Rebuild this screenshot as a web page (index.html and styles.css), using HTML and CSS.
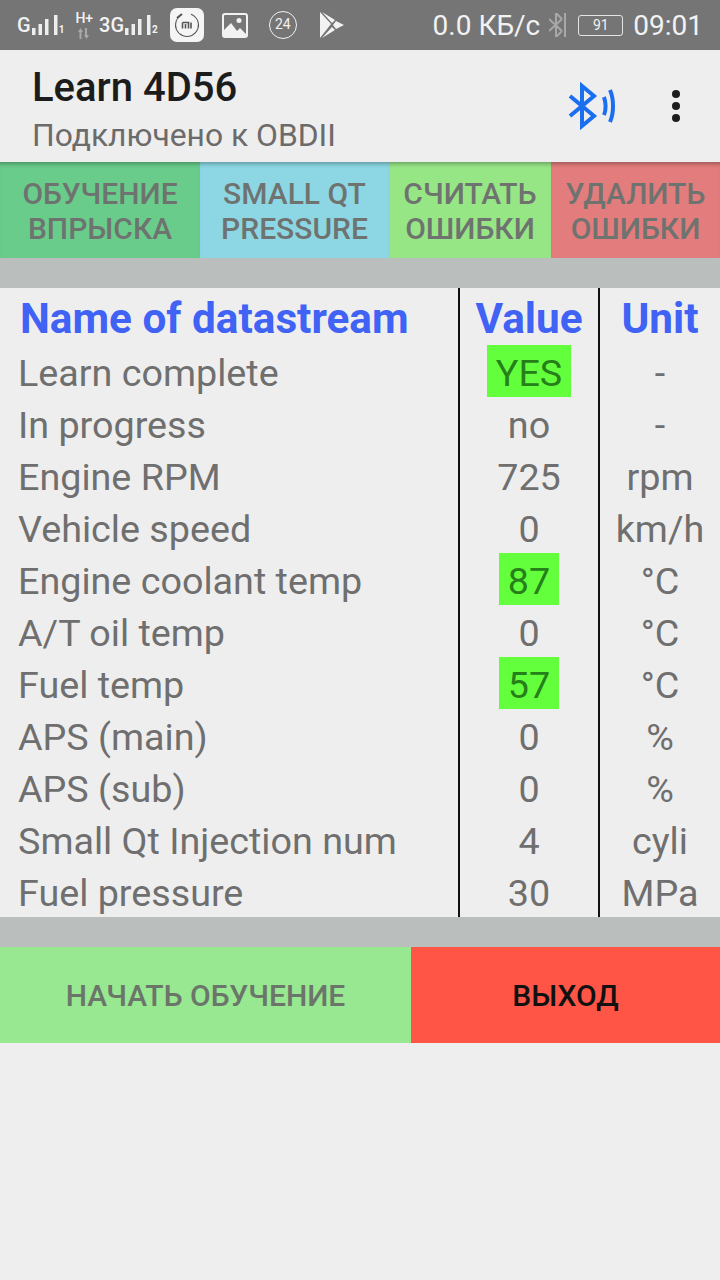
FILE: index.html
```html
<!DOCTYPE html>
<html lang="ru">

<head>
      <meta charset="UTF-8">
      <meta name="viewport" content="width=device-width, initial-scale=1.0">
      <title>Learn 4D56</title>
      <link rel="stylesheet" href="styles.css">
</head>

<body>
      <div class="statusbar">
            <div class="status-left">
                  <span class="sig"><span class="sig-net">G</span>
                        <svg width="27" height="20" viewBox="0 0 27 20"><path d="M0 13h3.500v7H0zM6.500 9H10v11H6.500zM13 4h3.500v16H13zM22 0h3.500v20H22z" fill="#eee"/></svg><span class="sig-num">1</span></span>
                  <span class="hplus">H+<svg width="12" height="11" viewBox="0 0 12 11"><path d="M0 4l2.500-4L5 4H3.500v7h-2V4zM7 0h2v7h2l-2.500 4L6 7h1z" fill="#a8a8a8"/></svg></span>
                  <span class="sig"><span class="sig-net">3G</span>
                        <svg width="27" height="20" viewBox="0 0 27 20"><path d="M0 13h3.500v7H0zM6.500 9H10v11H6.500zM13 4h3.500v16H13zM22 0h3.500v20H22z" fill="#eee"/></svg><span class="sig-num">2</span></span>
                  <span class="mi-icon"><svg width="34" height="34" viewBox="0 0 34 34"><circle cx="17" cy="17" r="11.500" fill="none" stroke="#555" stroke-width="1" stroke-dasharray="60 12" transform="rotate(-70 17 17)"/><path d="M7 10l5-4" stroke="#555" stroke-width="2"/><path d="M12.500 14.500h6v6M15.500 16v4.500M12.500 14.500v6M21 14.500v6" fill="none" stroke="#555" stroke-width="1.600"/></svg></span>
                  <svg class="pic-icon" width="26" height="25" viewBox="0 0 26 25"><rect x="1" y="1" width="24" height="23" rx="2" fill="#777" stroke="#f2f2f2" stroke-width="2"/><path d="M2 23v-6l7-7 6 8 3-3 6 6v2z" fill="#f2f2f2"/><circle cx="17" cy="7.500" r="2.500" fill="#f2f2f2"/></svg>
                  <span class="round-num">24</span>
                  <svg class="play-icon" width="26" height="28" viewBox="0 0 26 28"><path d="M1 1l11 12L1 27zM3 1l13 8-3 3zM3 27l13-8-3-3zM17 10l8 4-8 4-3-4z" fill="#f2f2f2"/></svg>
            </div>
            <div class="status-right">
                  <span class="speed">0.0 КБ/с</span>
                  <svg class="bt-off" width="18" height="24" viewBox="0 0 18 24"><path d="M0 6l13 12M0 18L13 6M7 0v24M16 0v24M7 0l6 6M7 24l6-6" fill="none" stroke="#a8a8a8" stroke-width="2"/></svg>
                  <span class="battery">91</span>
                  <span class="clock">09:01</span>
            </div>
      </div>

      <header class="appbar">
            <div class="appbar-text">
                  <div class="app-title">Learn 4D56</div>
                  <div class="app-sub">Подключено к OBDII</div>
            </div>
            <svg class="bt-icon" width="46" height="46" viewBox="0 0 46 46"><path d="M1 13l24 20-12 10V3l12 10L1 33" fill="none" stroke="#1a6ef0" stroke-width="4"/><path d="M35 14c2 6 2 13 0 18M41 7c4 9 4 23 0 32" fill="none" stroke="#1a6ef0" stroke-width="4"/></svg>
            <div class="more"><i></i><i></i><i></i></div>
      </header>

      <nav class="tabs">
            <button class="tab tab-learn">ОБУЧЕНИЕ<br>ВПРЫСКА</button>
            <button class="tab tab-small">SMALL QT<br>PRESSURE</button>
            <button class="tab tab-read">СЧИТАТЬ<br>ОШИБКИ</button>
            <button class="tab tab-del">УДАЛИТЬ<br>ОШИБКИ</button>
      </nav>

      <div class="divider"></div>

      <div class="stream">
            <div class="row head"><div class="c-name">Name of datastream</div><div class="c-val">Value</div><div class="c-unit">Unit</div></div>
            <div class="row"><div class="c-name">Learn complete</div><div class="c-val"><span class="ok">YES</span></div><div class="c-unit">-</div></div>
            <div class="row"><div class="c-name">In progress</div><div class="c-val">no</div><div class="c-unit">-</div></div>
            <div class="row"><div class="c-name">Engine RPM</div><div class="c-val">725</div><div class="c-unit">rpm</div></div>
            <div class="row"><div class="c-name">Vehicle speed</div><div class="c-val">0</div><div class="c-unit">km/h</div></div>
            <div class="row"><div class="c-name">Engine coolant temp</div><div class="c-val"><span class="ok">87</span></div><div class="c-unit">°C</div></div>
            <div class="row"><div class="c-name">A/T oil temp</div><div class="c-val">0</div><div class="c-unit">°C</div></div>
            <div class="row"><div class="c-name">Fuel temp</div><div class="c-val"><span class="ok">57</span></div><div class="c-unit">°C</div></div>
            <div class="row"><div class="c-name">APS (main)</div><div class="c-val">0</div><div class="c-unit">%</div></div>
            <div class="row"><div class="c-name">APS (sub)</div><div class="c-val">0</div><div class="c-unit">%</div></div>
            <div class="row"><div class="c-name">Small Qt Injection num</div><div class="c-val">4</div><div class="c-unit">cyli</div></div>
            <div class="row"><div class="c-name">Fuel pressure</div><div class="c-val">30</div><div class="c-unit">MPa</div></div>
      </div>

      <div class="divider"></div>

      <div class="actions">
            <button class="act act-start">НАЧАТЬ ОБУЧЕНИЕ</button>
            <button class="act act-exit">ВЫХОД</button>
      </div>
</body>

</html>
```

FILE: styles.css
```css
* {
      box-sizing: border-box;
}

body {
      font-family: Roboto, "Noto Sans", sans-serif;
      background-color: #eeeeee;
      margin: 0;
      height: 1280px;
      overflow: hidden;
}

.statusbar {
      height: 50px;
      background-color: #757575;
      color: #f2f2f2;
      display: flex;
      justify-content: space-between;
      align-items: center;
      padding: 0 17px;
}

.status-left,
.status-right {
      display: flex;
      align-items: center;
}

.sig {
      display: flex;
      align-items: flex-end;
      height: 20px;
}

.sig svg {
      display: block;
      margin-left: 1px;
}

.sig-net {
      font-size: 20px;
      line-height: 20px;
      font-weight: 500;
}

.sig-num {
      font-size: 10px;
      line-height: 11px;
      font-weight: 700;
}

.hplus {
      display: flex;
      flex-direction: column;
      align-items: center;
      font-size: 14px;
      line-height: 13px;
      font-weight: 500;
      margin: 0 6px 0 11px;
}

.hplus svg {
      margin-top: 3px;
}

.mi-icon {
      width: 34px;
      height: 34px;
      background-color: #f5f5f5;
      border-radius: 7px;
      margin-left: 12px;
}

.pic-icon {
      margin-left: 18px;
}

.round-num {
      width: 28px;
      height: 28px;
      border: 1.5px solid #f2f2f2;
      border-radius: 50%;
      font-size: 14px;
      line-height: 25px;
      text-align: center;
      margin-left: 21px;
}

.play-icon {
      margin-left: 22px;
}

.speed {
      font-size: 28px;
}

.bt-off {
      margin-left: 9px;
}

.battery {
      width: 45px;
      height: 21px;
      border: 1px solid #e4e4e4;
      border-radius: 3px;
      font-size: 14px;
      line-height: 19px;
      text-align: center;
      margin: 0 10px 0 11px;
}

.clock {
      font-size: 28px;
}

.appbar {
      height: 112px;
      display: flex;
      align-items: center;
      padding: 0 40px 0 32px;
}

.appbar-text {
      flex: 1;
      padding-top: 7px;
}

.app-title {
      font-size: 40px;
      font-weight: 500;
      line-height: 44px;
      color: #1c1c1c;
}

.app-sub {
      font-size: 31.800px;
      line-height: 36px;
      color: #6b6b6b;
      margin-top: 7px;
}

.bt-icon {
      margin-right: 57px;
      overflow: visible;
}

.more {
      display: flex;
      flex-direction: column;
      gap: 4px;
}

.more i {
      width: 8px;
      height: 8px;
      border-radius: 50%;
      background-color: #1c1c1c;
}

.tabs {
      height: 96px;
      display: grid;
      grid-template-columns: 200px 189px 162px 169px;
}

.tab {
      border: none;
      padding: 2px 0 0;
      font-family: inherit;
      font-size: 30px;
      line-height: 35px;
      font-weight: 500;
      color: #6f7370;
      box-shadow: inset 0 5px 4px -3px rgba(0, 0, 0, 0.3);
}

.tab-learn {
      background-color: #69cc8b;
}

.tab-small {
      background-color: #8dd7e5;
}

.tab-read {
      background-color: #97e686;
}

.tab-del {
      background-color: #e37c7c;
}

.divider {
      height: 30px;
      background-color: #babebc;
}

.stream {
      height: 629px;
}

.row {
      display: grid;
      grid-template-columns: 458px 142px 120px;
      grid-template-rows: 52px;
      height: 52px;
      font-size: 37.700px;
      line-height: 56px;
      color: #6f6f6f;
      text-align: center;
}

.row.head {
      grid-template-rows: 57px;
      height: 57px;
      line-height: 62px;
      font-size: 42.300px;
      font-weight: 700;
      color: #4062f5;
}

.c-name {
      text-align: left;
      padding-left: 18px;
      white-space: nowrap;
}

.head .c-name {
      padding-left: 20px;
}

.c-val {
      border-left: 2px solid #111;
      border-right: 2px solid #111;
}

.ok {
      display: block;
      width: fit-content;
      margin: 0 auto;
      background-color: #64ff3c;
      color: #26801a;
      padding: 0 9px;
      height: 52px;
}

.actions {
      display: grid;
      grid-template-columns: 411px 309px;
      height: 96px;
}

.act {
      border: none;
      font-family: inherit;
      font-size: 30px;
      font-weight: 500;
}

.act-start {
      background-color: #97e890;
      color: #6b756a;
}

.act-exit {
      background-color: #ff5546;
      color: #111;
}
```
